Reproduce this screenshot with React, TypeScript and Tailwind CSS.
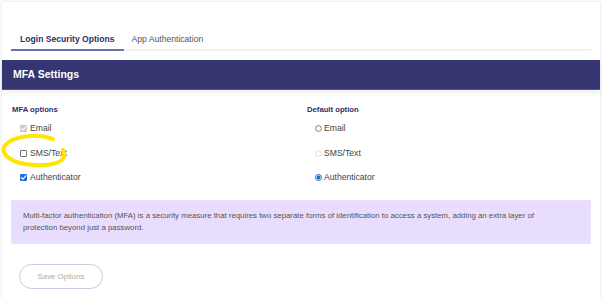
import React from "react";

const font = { fontFamily: '"Liberation Sans", Arial, sans-serif' };

function Checkbox({ state }: { state: "disabled" | "off" | "on" }) {
  if (state === "off") {
    return <span className="inline-block w-[7px] h-[7px] border border-[#6f6f6f] bg-white rounded-[1px] shrink-0" />;
  }
  const bg = state === "on" ? "bg-[#1a6fd8]" : "bg-[#c9c9c9]";
  return (
    <span className={`inline-flex items-center justify-center w-[7px] h-[7px] rounded-[1px] shrink-0 ${bg}`}>
      <svg width="7" height="7" viewBox="0 0 7 7">
        <path d="M1.3 3.6 L2.9 5.1 L5.8 1.8" fill="none" stroke="#fff" strokeWidth="1.2" strokeLinecap="round" strokeLinejoin="round" />
      </svg>
    </span>
  );
}

function Radio({ state }: { state: "off" | "disabled" | "on" }) {
  return (
    <svg width="7" height="7" viewBox="0 0 7 7" className="shrink-0">
      {state === "on" ? (
        <>
          <circle cx="3.5" cy="3.5" r="3" fill="#fff" stroke="#1a6fd8" strokeWidth="1" />
          <circle cx="3.5" cy="3.5" r="1.9" fill="#1a6fd8" />
        </>
      ) : (
        <circle cx="3.5" cy="3.5" r="2.9" fill="#fff" stroke={state === "off" ? "#6f6f6f" : "#d6d6d6"} strokeWidth="0.9" />
      )}
    </svg>
  );
}

export default function App() {
  const leftRows: { label: string; state: "disabled" | "off" | "on" }[] = [
    { label: "Email", state: "disabled" },
    { label: "SMS/Text", state: "off" },
    { label: "Authenticator", state: "on" },
  ];
  const rightRows: { label: string; state: "off" | "disabled" | "on" }[] = [
    { label: "Email", state: "off" },
    { label: "SMS/Text", state: "disabled" },
    { label: "Authenticator", state: "on" },
  ];
  return (
    <div className="relative w-[602px] h-[298px] overflow-hidden bg-white" style={font}>
      <div className="px-[2px] pt-[2px] h-full">
        <div className="h-[310px] bg-white shadow-[0_0_3px_rgba(0,0,0,0.14)] pt-[32px]">
          {/* Tabs */}
          <div className="mx-[9px] flex border-b-2 border-[#f1f1f1]">
            <div className="px-[9px] pb-[4px] -mb-[2px] border-b-2 border-[#6d70a8] text-[8.6px] leading-[11px] font-bold text-[#2e2f6c]">
              Login Security Options
            </div>
            <div className="px-[8px] pb-[4px] text-[8.6px] leading-[11px] text-[#555]">App Authentication</div>
          </div>

          {/* Header */}
          <div className="mt-[9px] h-[30px] bg-[#343571] border-b border-[#55578e] flex items-center pl-[11px] shadow-[0_3px_6px_rgba(0,0,0,0.07)]">
            <span className="text-white font-bold text-[10.5px] leading-none">MFA Settings</span>
          </div>

          {/* Options */}
          <div className="mx-[9px] mt-[15px] grid grid-cols-2 gap-x-[12px]">
            <div className="pl-[1px]">
              <div className="text-[7.7px] leading-[10px] font-bold text-[#2e2f6c]">MFA options</div>
              <div className="mt-[8px] flex flex-col gap-[13.5px] pl-[8px]">
                {leftRows.map((r) => (
                  <div key={r.label} className="flex items-center gap-[3px] h-[11px]">
                    <Checkbox state={r.state} />
                    <span className="text-[8.6px] leading-[11px] text-[#444]">{r.label}</span>
                  </div>
                ))}
              </div>
            </div>
            <div>
              <div className="text-[7.7px] leading-[10px] font-bold text-[#2e2f6c]">Default option</div>
              <div className="mt-[8px] flex flex-col gap-[13.5px] pl-[8px]">
                {rightRows.map((r) => (
                  <div key={r.label} className="flex items-center gap-[2px] h-[11px]">
                    <Radio state={r.state} />
                    <span className="text-[8.6px] leading-[11px] text-[#444]">{r.label}</span>
                  </div>
                ))}
              </div>
            </div>
          </div>

          {/* Info box */}
          <div className="mx-[9px] mt-[17px] bg-[#e8ddfc] border border-[#ece4fc] pl-[11px] pr-[30px] pt-[9px] pb-[9px]">
            <p className="text-[7.8px] leading-[12px] text-[#555]">
              Multi-factor authentication (MFA) is a security measure that requires two separate forms of identification to access a system, adding an extra layer of protection beyond just a password.
            </p>
          </div>

          {/* Button */}
          <div className="mx-[9px] mt-[18px] pl-[8px]">
            <button className="w-[84px] h-[25px] rounded-full border border-[#cdc9df] bg-white text-[7.8px] text-[#ababab]">
              Save Options
            </button>
          </div>
        </div>
      </div>

      {/* Yellow annotation */}
      <svg className="absolute left-0 top-0 pointer-events-none" width="602" height="298" viewBox="0 0 602 298">
        <path
          d="M53 139 C 36 133, 12 136, 4.5 146 C 1 153, 8 161, 25 164 C 42 166.5, 59 165, 63.5 158 C 64.5 155, 64 152, 63 150"
          fill="none"
          stroke="#ffe500"
          strokeWidth="4"
          strokeLinecap="round"
        />
      </svg>
    </div>
  );
}
